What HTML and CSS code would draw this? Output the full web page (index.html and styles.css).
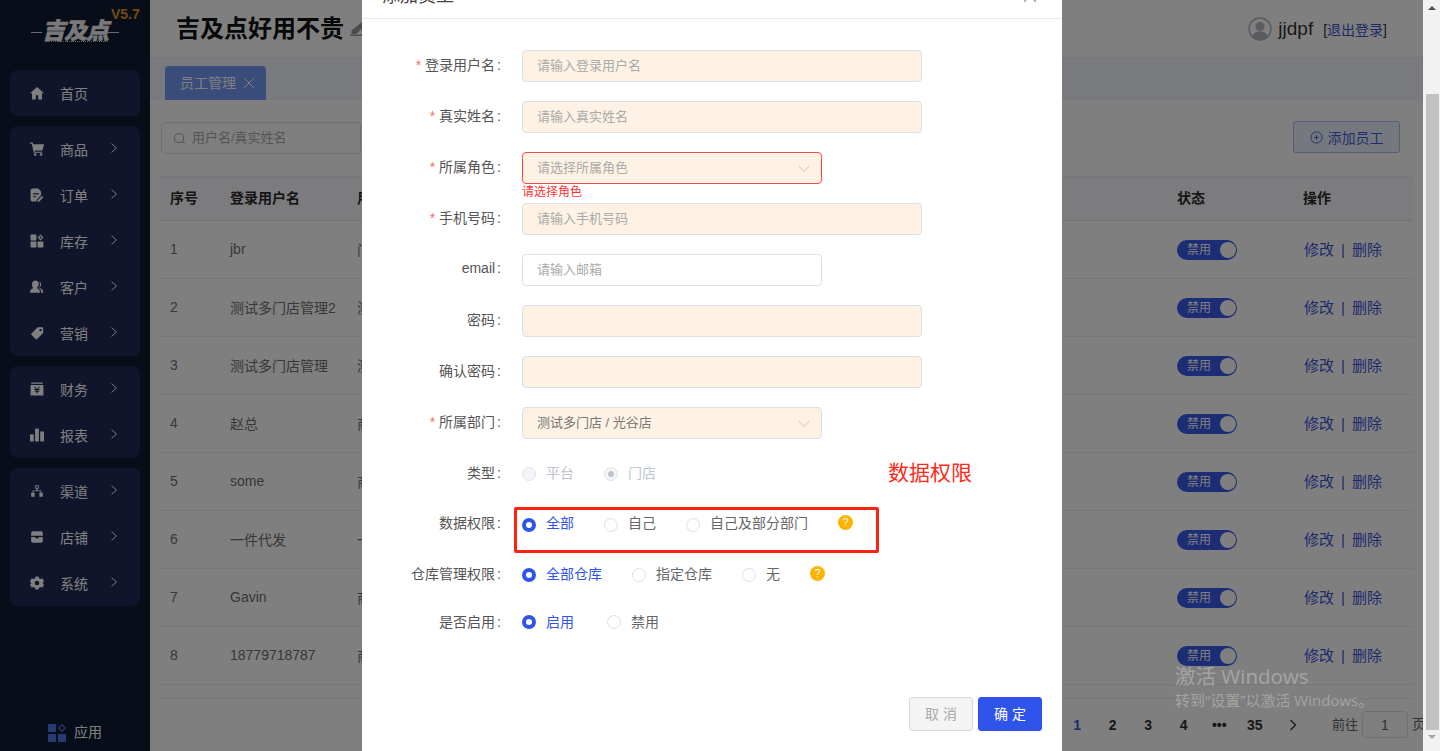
FILE: index.html
```html
<!DOCTYPE html>
<html lang="zh-CN">
<head>
<meta charset="utf-8">
<title>员工管理</title>
<link rel="stylesheet" href="styles.css">
</head>
<body>
<div class="page">
  <div class="app">
    <aside class="sidebar">
      <div class="brand">
        <span class="brand-version">V5.7</span>
        <span class="brand-rule brand-rule-left"></span>
        <span class="brand-name">吉及点</span>
        <span class="brand-rule brand-rule-right"></span>
        <span class="brand-dots"></span>
      </div>
      <nav class="menu">
        <div class="menu-group">
          <a class="menu-item"><svg class="menu-icon" viewBox="0 0 24 24"><path d="M12 1.500 0 12.500h3.500V23h6.500v-7h4v7h6.500V12.500H24z"/></svg><span>首页</span></a>
        </div>
        <div class="menu-group">
          <a class="menu-item"><svg class="menu-icon" viewBox="0 0 24 24"><path d="M0 1h4.600l.8 3H24l-2.600 10.500H7.600l.5 2H21v2H6.500L3 3H0z"/><circle cx="9" cy="21.500" r="2.200"/><circle cx="19" cy="21.500" r="2.200"/></svg><span>商品</span><svg class="menu-arrow" viewBox="0 0 10 14"><path d="M2 1.500 8 7l-6 5.500"/></svg></a>
          <a class="menu-item"><svg class="menu-icon" viewBox="0 0 24 24"><path fill-rule="evenodd" d="M4 1h10l5 5v6.500L11.500 20l-.5 3H4a3 3 0 0 1-3-3V4a3 3 0 0 1 3-3zm1 8v2h10V9zm0 5v2h6v-2z"/><path d="M20.500 13.500 23 16l-7.500 7.500H13V21z"/></svg><span>订单</span><svg class="menu-arrow" viewBox="0 0 10 14"><path d="M2 1.500 8 7l-6 5.500"/></svg></a>
          <a class="menu-item"><svg class="menu-icon" viewBox="0 0 24 24"><rect x="1" y="1" width="10" height="10" rx="1"/><rect x="1" y="13" width="10" height="10" rx="1"/><rect x="13" y="13" width="10" height="10" rx="1"/><path fill-rule="evenodd" d="m18 1 5 5-5 5-5-5zm0 3-2 2 2 2 2-2z"/></svg><span>库存</span><svg class="menu-arrow" viewBox="0 0 10 14"><path d="M2 1.500 8 7l-6 5.500"/></svg></a>
          <a class="menu-item"><svg class="menu-icon" viewBox="0 0 24 24"><path d="M9.500 1a5.500 5.500 0 0 1 5.500 6c0 2.500-1 4.500-2.500 5.500V14l4 3 .5 5H0l.5-5 4.500-3v-1.500C3.500 11.500 3.500 9.500 3.500 7a6 6 0 0 1 6-6z"/><path d="M16 2.500a5 5 0 0 1 3 5c0 2-.8 3.500-2 4.500v1.500l4 2.500 2 6h-4l-.5-5.500-3-2.500c1-2 1.500-3.500 1.500-6 0-2-.3-3.500-1-5.500z"/></svg><span>客户</span><svg class="menu-arrow" viewBox="0 0 10 14"><path d="M2 1.500 8 7l-6 5.500"/></svg></a>
          <a class="menu-item"><svg class="menu-icon" viewBox="0 0 24 24"><path fill-rule="evenodd" d="M13 2h8.500l1 1v9L11 23.500 1.500 14zm5 3a2 2 0 1 0 0 4 2 2 0 0 0 0-4z"/></svg><span>营销</span><svg class="menu-arrow" viewBox="0 0 10 14"><path d="M2 1.500 8 7l-6 5.500"/></svg></a>
        </div>
        <div class="menu-group">
          <a class="menu-item"><svg class="menu-icon" viewBox="0 0 24 24"><path fill-rule="evenodd" d="M2 1h20v2H2zM1 5h22v18H1zm7.700 3L12 12l3.300-4h2l-3.300 4h2.500v1.700h-3.500v1.100H16v1.700h-3v3h-2v-3H8v-1.700h3v-1.100H7.500V12H10L6.700 8z"/></svg><span>财务</span><svg class="menu-arrow" viewBox="0 0 10 14"><path d="M2 1.500 8 7l-6 5.500"/></svg></a>
          <a class="menu-item"><svg class="menu-icon" viewBox="0 0 24 24"><rect x="0" y="11" width="6.500" height="12"/><rect x="8.700" y="1" width="6.500" height="22"/><rect x="17.500" y="6" width="6.500" height="17"/></svg><span>报表</span><svg class="menu-arrow" viewBox="0 0 10 14"><path d="M2 1.500 8 7l-6 5.500"/></svg></a>
        </div>
        <div class="menu-group">
          <a class="menu-item"><svg class="menu-icon" viewBox="0 0 24 24"><path fill-rule="evenodd" d="M9 2h6v6h-2v3h6.500v4H22v7h-6v-7h2v-2.500H6V15h2v7H2v-7h2.500v-4H11V8H9zm1.500 1.500v3h3v-3z"/></svg><span>渠道</span><svg class="menu-arrow" viewBox="0 0 10 14"><path d="M2 1.500 8 7l-6 5.500"/></svg></a>
          <a class="menu-item"><svg class="menu-icon" viewBox="0 0 24 24"><path d="M5 2h14a3 3 0 0 1 3 3v5H2V5a3 3 0 0 1 3-3zM2 12h7v2h6v-2h7v7a3 3 0 0 1-3 3H5a3 3 0 0 1-3-3z"/></svg><span>店铺</span><svg class="menu-arrow" viewBox="0 0 10 14"><path d="M2 1.500 8 7l-6 5.500"/></svg></a>
          <a class="menu-item"><svg class="menu-icon" viewBox="0 0 24 24"><path fill-rule="evenodd" d="M9.500 1h5l1 3 2.500 1.200L21 4l3 5-2 2.500v1L24 15l-3 5-3-1.200-2.500 1.200-1 3h-5l-1-3L6 18.800 3 20l-3-5 2-2.500v-1L0 9l3-5 3 1.200L8.500 4zM12 8a4 4 0 1 0 0 8 4 4 0 0 0 0-8z"/></svg><span>系统</span><svg class="menu-arrow" viewBox="0 0 10 14"><path d="M2 1.500 8 7l-6 5.500"/></svg></a>
        </div>
      </nav>
      <div class="apps">
        <svg class="apps-icon" viewBox="0 0 18 18"><rect x="0" y="0" width="8" height="8" rx="1"/><rect x="0" y="10" width="8" height="8" rx="1"/><rect x="10" y="10" width="8" height="8" rx="1"/><path class="apps-diamond" d="m14 .8 3.200 3.200L14 7.200 10.800 4z"/></svg>
        <span class="apps-text">应用</span>
      </div>
    </aside>

    <main class="main">
      <header class="topbar">
        <div class="topbar-title">
          <h1>吉及点好用不贵</h1>
          <svg class="edit-icon" viewBox="0 0 20 15"><path d="M13 0 17 3.500 6 13H1.500V9.500z"/><rect x="0" y="13.500" width="20" height="1.500"/></svg>
        </div>
        <div class="user">
          <svg class="avatar" viewBox="0 0 24 24"><circle cx="12" cy="12" r="11" class="avatar-ring"/><circle cx="12" cy="9.500" r="4.500"/><path d="M4 20c1-4 4-5.500 8-5.500s7 1.500 8 5.500a11 11 0 0 1-16 0z"/></svg>
          <span class="user-name">jjdpf</span>
          <span class="logout">[<a>退出登录</a>]</span>
        </div>
      </header>

      <div class="tabs">
        <div class="tab"><span class="tab-text">员工管理</span><svg class="tab-close" viewBox="0 0 12 12"><path d="m1 1 10 10M11 1 1 11"/></svg></div>
      </div>

      <section class="content">
        <div class="toolbar">
          <div class="search">
            <svg class="search-icon" viewBox="0 0 14 14"><circle cx="6.500" cy="6.500" r="5"/><path d="m10.500 10.500 2 2"/></svg>
            <span class="search-text">用户名/真实姓名</span>
          </div>
          <button class="add-btn"><svg class="add-icon" viewBox="0 0 14 14"><circle cx="7" cy="7" r="6"/><path d="M7 4.500v5M4.500 7h5"/></svg>添加员工</button>
        </div>

        <table class="grid">
          <colgroup><col class="c-no"><col class="c-user"><col class="c-real"><col class="c-state"><col class="c-op"></colgroup>
          <thead>
            <tr><th>序号</th><th>登录用户名</th><th>用户姓名</th><th>状态</th><th>操作</th></tr>
          </thead>
          <tbody>
            <tr><td>1</td><td>jbr</td><td>门店</td><td><span class="switch">禁用<i></i></span></td><td class="ops"><a>修改</a><b>|</b><a>删除</a></td></tr>
            <tr><td>2</td><td>测试多门店管理2</td><td>测试</td><td><span class="switch">禁用<i></i></span></td><td class="ops"><a>修改</a><b>|</b><a>删除</a></td></tr>
            <tr><td>3</td><td>测试多门店管理</td><td>测试</td><td><span class="switch">禁用<i></i></span></td><td class="ops"><a>修改</a><b>|</b><a>删除</a></td></tr>
            <tr><td>4</td><td>赵总</td><td>商户</td><td><span class="switch">禁用<i></i></span></td><td class="ops"><a>修改</a><b>|</b><a>删除</a></td></tr>
            <tr><td>5</td><td>some</td><td>商户</td><td><span class="switch">禁用<i></i></span></td><td class="ops"><a>修改</a><b>|</b><a>删除</a></td></tr>
            <tr><td>6</td><td>一件代发</td><td>一件</td><td><span class="switch">禁用<i></i></span></td><td class="ops"><a>修改</a><b>|</b><a>删除</a></td></tr>
            <tr><td>7</td><td>Gavin</td><td>商户</td><td><span class="switch">禁用<i></i></span></td><td class="ops"><a>修改</a><b>|</b><a>删除</a></td></tr>
            <tr><td>8</td><td>18779718787</td><td>商户</td><td><span class="switch">禁用<i></i></span></td><td class="ops"><a>修改</a><b>|</b><a>删除</a></td></tr>
            <tr class="spacer-row"><td colspan="5"></td></tr>
          </tbody>
        </table>

        <div class="pager">
          <span class="pg pg-on">1</span><span class="pg">2</span><span class="pg">3</span><span class="pg">4</span><span class="pg">•••</span><span class="pg">35</span>
          <span class="pg pg-last"><svg class="pg-next" viewBox="0 0 8 12"><path d="m1.500 1 5 5-5 5"/></svg></span>
          <span class="pg-jump">前往</span><span class="pg-input">1</span><span class="pg-unit">页</span>
        </div>
      </section>
    </main>

    <div class="overlay"></div>

    <div class="modal">
      <div class="modal-head">
        <span class="modal-title">添加员工</span>
        <svg class="modal-close" viewBox="0 0 12 12"><path d="m1 1 10 10M11 1 1 11"/></svg>
      </div>
      <form class="form">
        <div class="row"><label class="lbl req">登录用户名</label><div class="field wide">请输入登录用户名</div></div>
        <div class="row"><label class="lbl req">真实姓名</label><div class="field wide">请输入真实姓名</div></div>
        <div class="row"><label class="lbl req">所属角色</label><div class="field error">请选择所属角色<svg class="caret" viewBox="0 0 12 8"><path d="m1 1 5 5.500L11 1"/></svg></div><span class="err-msg">请选择角色</span></div>
        <div class="row"><label class="lbl req">手机号码</label><div class="field wide">请输入手机号码</div></div>
        <div class="row"><label class="lbl">email</label><div class="field plain">请输入邮箱</div></div>
        <div class="row"><label class="lbl">密码</label><div class="field wide"></div></div>
        <div class="row"><label class="lbl">确认密码</label><div class="field wide"></div></div>
        <div class="row"><label class="lbl req">所属部门</label><div class="field value">测试多门店 / 光谷店<svg class="caret" viewBox="0 0 12 8"><path d="m1 1 5 5.500L11 1"/></svg></div></div>

        <div class="row radios disabled">
          <label class="lbl">类型</label>
          <span class="radio"></span><span class="opt">平台</span>
          <span class="radio dot"></span><span class="opt">门店</span>
          <span class="note">数据权限</span>
        </div>
        <div class="row radios r-data">
          <label class="lbl">数据权限</label>
          <span class="radio on"></span><span class="opt on">全部</span>
          <span class="radio"></span><span class="opt">自己</span>
          <span class="radio"></span><span class="opt">自己及部分部门</span>
          <span class="help">?</span>
          <span class="mark"></span>
        </div>
        <div class="row radios r-store">
          <label class="lbl">仓库管理权限</label>
          <span class="radio on"></span><span class="opt on">全部仓库</span>
          <span class="radio"></span><span class="opt">指定仓库</span>
          <span class="radio"></span><span class="opt">无</span>
          <span class="help">?</span>
        </div>
        <div class="row radios r-on">
          <label class="lbl">是否启用</label>
          <span class="radio on"></span><span class="opt on">启用</span>
          <span class="radio r-off"></span><span class="opt">禁用</span>
        </div>
      </form>
      <div class="modal-foot">
        <button class="btn btn-cancel">取 消</button>
        <button class="btn btn-ok">确 定</button>
      </div>
    </div>
  </div>

  <div class="scrollbar">
    <span class="sb-up"></span>
    <span class="sb-thumb"></span>
    <span class="sb-down"></span>
  </div>

  <div class="watermark">
    <div class="wm-big">激活 Windows</div>
    <div class="wm-small">转到“设置”以激活 Windows。</div>
  </div>
</div>
</body>
</html>
```

FILE: styles.css
```css
* { box-sizing: border-box; }
html, body { margin: 0; height: 100%; overflow: hidden; }
body { font-family: "Liberation Sans", "Noto Sans CJK SC", sans-serif; font-size: 14px; color: #666; }
a { color: inherit; }

.page { position: relative; display: flex; width: 1440px; height: 751px; overflow: hidden; background: #fff; }
.app { position: relative; display: flex; flex: 1; min-width: 0; height: 100%; overflow: hidden; }

/* sidebar */
.sidebar { display: flex; flex-direction: column; width: 150px; flex: none; background: #0e1a33; color: #fff; }
.brand { position: relative; display: flex; align-items: center; justify-content: center; height: 70px; }
.brand-version { position: absolute; top: 6px; left: 111px; font-size: 14px; font-weight: 700; line-height: 16px; color: #e09a10; }
.brand-name { font-size: 23px; font-weight: 900; font-style: italic; letter-spacing: -1px; line-height: 28px; margin: -9px 0 0; color: #f2f2f2; -webkit-text-stroke: .5px #f2f2f2; }
.brand-rule { width: 11px; height: 1px; background: #d8d8d8; margin-top: -6px; }
.brand-dots { position: absolute; top: 41px; left: 48px; width: 60px; border-top: 1px dotted #bbb; }
.menu { display: flex; flex-direction: column; gap: 10px; padding: 0 10px; }
.menu-group { border-radius: 8px; background: #202b58; }
.menu-item { display: flex; align-items: center; height: 46px; padding-left: 20px; font-size: 14px; }
.menu-icon { width: 14px; height: 14px; flex: none; fill: #fff; margin-right: 16px; }
.menu-arrow { width: 8px; height: 12px; margin: -3px 0 0 22px; fill: none; stroke: #fff; stroke-width: 1.200; }
.apps { display: flex; align-items: center; justify-content: center; gap: 8px; margin-top: auto; height: 37px; }
.apps-text { padding-bottom: 3px; }
.apps-icon { width: 18px; height: 18px; fill: #4f74e8; }
.apps-diamond { fill: none; stroke: #4f74e8; stroke-width: 1.300; }

/* main column */
.main { display: flex; flex-direction: column; flex: 1; min-width: 0; background: #fff; }
.topbar { display: flex; align-items: center; justify-content: space-between; height: 58px; flex: none; padding: 0 36px 0 27px; background: #fff; border-bottom: 1px solid #f0f0f0; }
.topbar-title { display: flex; align-items: center; gap: 6px; margin-left: -1px; }
.topbar-title h1 { margin: 0; font-size: 24px; font-weight: 700; line-height: 32px; color: #111; padding-top: 1px; }
.edit-icon { width: 20px; height: 15px; margin-top: 0; fill: #999; }
.user { display: flex; align-items: center; color: #333; }
.avatar { width: 24px; height: 24px; fill: #b5b8bf; margin-right: 6px; }
.avatar-ring { fill: #fff; stroke: #b5b8bf; stroke-width: 1.500; }
.user-name { font-size: 19px; color: #333; margin-right: 10px; }
.logout { font-size: 14px; color: #333; }
.logout a { color: #3a55c8; }

.tabs { display: flex; align-items: flex-end; height: 42px; flex: none; padding-left: 15px; background: #f3f5fc; }
.tab { display: flex; align-items: center; width: 101px; height: 34px; padding: 0 0 0 15px; gap: 7px; border-radius: 4px 4px 0 0; background: #7498f5; color: #fff; font-size: 14px; }
.tab-text { padding-bottom: 3px; }
.tab-close { width: 12px; height: 12px; margin-top: -1px; fill: none; stroke: #fff; stroke-width: 1; }

.content { padding: 0 10px; flex: 1; min-height: 0; }
.toolbar { display: flex; justify-content: space-between; align-items: flex-start; height: 32px; margin-top: 22px; padding: 0 13px 0 1px; }
.search { display: flex; align-items: center; gap: 6px; width: 200px; height: 32px; padding-left: 11px; border: 1px solid #dcdfe6; border-radius: 4px; font-size: 13px; color: #aaa; }
.search-text { padding-bottom: 4px; }
.search-icon { width: 13px; height: 13px; fill: none; stroke: #aaa; stroke-width: 1.100; }
.add-btn { display: flex; align-items: center; justify-content: center; gap: 5px; width: 107px; height: 32px; margin-top: -1px; padding: 0; border: 1px solid #a8bdf4; border-radius: 3px; background: #ecf1fe; color: #3f5fd8; font-family: inherit; font-size: 14px; }
.add-icon { width: 13px; height: 13px; fill: none; stroke: #3f5fd8; stroke-width: 1; }

.grid { width: 100%; margin-top: 22px; border-collapse: separate; border-spacing: 0; table-layout: fixed; }
.c-no { width: 60px; } .c-user { width: 127px; } .c-state { width: 126px; } .c-op { width: 120px; }
.grid th { height: 45px; padding: 0 0 3px 10px; text-align: left; font-size: 14px; font-weight: 700; color: #2b2b2b; background: #f8f9fc; border-top: 1px solid #ebeef5; border-bottom: 1px solid #e4e7f0; }
.grid td { height: 58px; padding: 0 0 1px 10px; font-size: 14px; color: #707070; border-bottom: 1px solid #ebeef5; white-space: nowrap; }
.grid .spacer-row td { height: 14px; padding: 0; }
.switch { position: relative; top: 1px; display: inline-block; width: 60px; height: 20px; padding-left: 10px; border-radius: 10px; background: #3b5bea; color: #fff; font-size: 12px; line-height: 20px; vertical-align: middle; }
.switch i { position: absolute; top: 2px; right: 1px; width: 16px; height: 16px; border-radius: 50%; background: #fff; }
.grid .ops { color: #3f55d8; padding: 0 0 3px 11px; font-size: 15px; }
.ops b { margin: 0 7px; font-weight: 400; }

.pager { display: flex; align-items: center; justify-content: flex-end; height: 27px; margin: 12px -13px 0 0; font-size: 14px; font-weight: 700; color: #303133; }
.pg { display: flex; align-items: center; justify-content: center; width: 35.500px; }
.pg-on { color: #3b5bea; }
.pg-last { margin-left: 3px; }
.pg-next { width: 8px; height: 12px; fill: none; stroke: #303133; stroke-width: 1.300; }
.pg-jump { margin-left: 21px; font-weight: 400; font-size: 13px; color: #606266; padding-bottom: 2px; }
.pg-input { display: flex; align-items: center; justify-content: center; width: 46px; height: 27px; margin: 0 4px; border: 1px solid #dcdfe6; border-radius: 4px; font-weight: 400; color: #606266; }
.pg-unit { font-weight: 400; color: #606266; width: 14px; padding-bottom: 3px; }

/* overlay + modal */
.overlay { position: absolute; inset: 0; background: rgba(0, 0, 0, .5); }
.modal { position: absolute; top: -30px; left: 362px; width: 700px; height: 800px; background: #fff; }
.modal-head { display: flex; align-items: center; justify-content: space-between; height: 49px; padding: 0 25px 0 20px; border-bottom: 1px solid #e8eaf0; }
.modal-title { font-size: 18px; line-height: 24px; color: #444; margin-top: 4px; }
.modal-close { width: 14px; height: 14px; margin-top: 3px; fill: none; stroke: #888; stroke-width: 1; }

.form { padding-top: 31px; }
.row { position: relative; display: flex; align-items: center; height: 32px; margin-bottom: 19px; }
.lbl { flex: none; width: 141px; margin-right: 19px; padding: 0 2px 4px 0; text-align: right; font-size: 14px; color: #555; }
.lbl::after { content: ":"; margin-left: 2px; }
.req::before { content: "* "; color: #f56c6c; }
.field { position: relative; display: flex; align-items: center; width: 300px; height: 32px; padding: 0 0 4px 14px; border: 1px solid #dcdfe6; border-radius: 4px; background: #fdf2e3; font-size: 13px; color: #aaa; }
.wide { width: 400px; }
.plain { background: #fff; }
.value { color: #777; }
.error { border-color: #f44; }
.caret { position: absolute; right: 11px; top: 12px; width: 12px; height: 8px; fill: none; stroke: #c8c8c8; stroke-width: 1; }
.err-msg { position: absolute; left: 160px; top: 32px; font-size: 12px; line-height: 16px; color: #f33; }

.radio { flex: none; position: relative; width: 14px; height: 14px; margin-right: 10px; border: 1px solid #dcdfe6; border-radius: 50%; background: #fff; }
.radio.on { border: 4.500px solid #2f54eb; background: #fff; }
.opt { margin-right: 30px; padding-bottom: 4px; font-size: 14px; color: #666; }
.opt.on { color: #2f54eb; }
.disabled .radio { background: #f4f5f8; border-color: #e0e3ea; }
.disabled .opt { color: #c0c4cc; }
.radio.dot::after { content: ""; position: absolute; top: 3px; left: 3px; width: 6px; height: 6px; border-radius: 50%; background: #c0c4cc; }
.help { flex: none; width: 15px; height: 15px; margin: -3px 0 0 0; border-radius: 50%; background: #fdb300; color: #fff; font-size: 11px; line-height: 15px; text-align: center; }
.note { position: absolute; left: 526px; top: 3px; font-size: 21px; line-height: 24px; color: #ff2a1a; }
.mark { position: absolute; left: 152px; top: -2px; width: 365px; height: 46px; border: 3px solid #ff2211; border-radius: 2px; }
.r-data { margin-bottom: 18px; }
.r-data .opt, .r-data .lbl { padding-bottom: 6px; }
.r-data .help { margin-top: -5px; }
.r-store { margin-bottom: 15px; }
.r-on { margin-bottom: 0; }
.r-on .opt, .r-on .lbl { padding-bottom: 2px; }
.r-off { margin-left: 3px; }

.modal-foot { position: absolute; top: 727px; right: 20px; display: flex; gap: 5px; }
.btn { width: 64px; height: 34px; padding: 0 0 2px; border-radius: 3px; font-family: inherit; font-size: 14px; }
.btn-cancel { background: #f4f4f5; border: 1px solid #d9d9d9; color: #aaa; }
.btn-ok { background: #2f54eb; border: 1px solid #2f54eb; color: #fff; }

/* window scrollbar */
.scrollbar { position: relative; display: flex; flex-direction: column; align-items: center; flex: none; width: 17px; padding-left: 1px; background: #f1f1f1; }
.sb-up { width: 0; height: 0; margin-top: 6px; border: 4px solid transparent; border-top: 0; border-bottom: 4px solid #505050; }
.sb-thumb { width: 13px; height: 636px; margin-top: 84px; background: #c1c1c1; }
.sb-down { width: 0; height: 0; margin-top: 5px; border: 4px solid transparent; border-bottom: 0; border-top: 4px solid #a3a3a3; }

.watermark { position: absolute; top: 662px; left: 1175px; color: rgba(255, 255, 255, .3); font-family: "Open Sans", "Noto Sans CJK SC", sans-serif; pointer-events: none; white-space: nowrap; }
.wm-big { font-size: 20.500px; line-height: 28px; }
.wm-small { font-size: 15px; line-height: 21px; }
```
